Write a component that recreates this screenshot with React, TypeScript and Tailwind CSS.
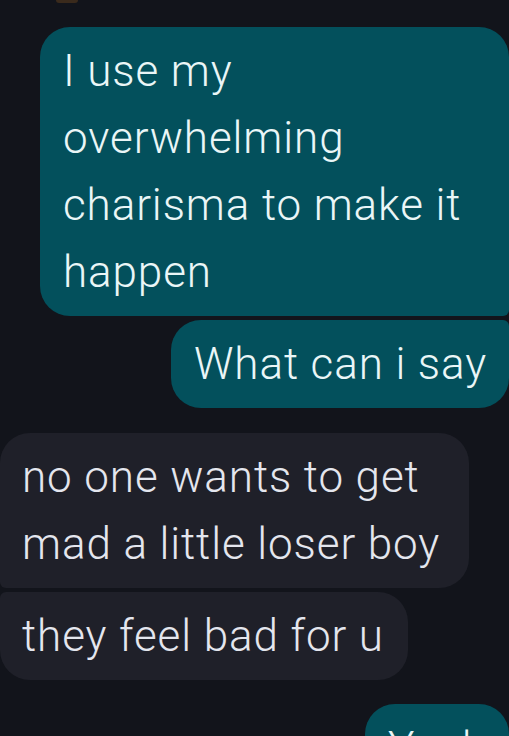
import React from 'react'

interface Bubble {
  id: number
  mine: boolean
  text: string
  shape: string
  gap: string
}

const messages: Bubble[] = [
  {
    id: 1,
    mine: true,
    text: 'I use my overwhelming charisma to make it happen',
    shape: 'rounded-tl-[30px] rounded-tr-[30px] rounded-bl-[30px] rounded-br-[6px]',
    gap: 'mt-0',
  },
  {
    id: 2,
    mine: true,
    text: 'What can i say',
    shape: 'rounded-tl-[30px] rounded-tr-[6px] rounded-bl-[30px] rounded-br-[30px]',
    gap: 'mt-[4px]',
  },
  {
    id: 3,
    mine: false,
    text: 'no one wants to get mad a little loser boy',
    shape: 'rounded-tl-[30px] rounded-tr-[30px] rounded-bl-[6px] rounded-br-[30px]',
    gap: 'mt-[25px]',
  },
  {
    id: 4,
    mine: false,
    text: 'they feel bad for u',
    shape: 'rounded-tl-[6px] rounded-tr-[30px] rounded-bl-[30px] rounded-br-[30px]',
    gap: 'mt-[4px]',
  },
  {
    id: 5,
    mine: true,
    text: 'Yeah',
    shape: 'rounded-tl-[30px] rounded-tr-[30px] rounded-bl-[30px] rounded-br-[6px]',
    gap: 'mt-[24px]',
  },
]

export default function App() {
  return (
    <div
      className="w-[509px] h-[736px] overflow-hidden bg-[#12141b]"
      style={{ fontFamily: 'Roboto, "Noto Sans", sans-serif' }}
    >
      {/* sliver of a reaction from the message above */}
      <div className="ml-[56px] h-[3px] w-[22px] rounded-b-full bg-[#3a2a1c]" />

      <div className="flex flex-col pt-[24px]">
        {messages.map((m) => (
          <div
            key={m.id}
            className={`flex ${m.gap} ${m.mine ? 'justify-end' : 'justify-start'}`}
          >
            <div
              className={`max-w-[469px] py-[10.5px] text-[44px] leading-[67px] font-light tracking-[0.9px] ${m.shape} ${
                m.mine
                  ? 'bg-[#03505c] text-[#eaf6f7] pl-[23px] pr-[22px]'
                  : 'bg-[#1f2029] text-[#e4e6ee] pl-[22px] pr-[24px]'
              }`}
            >
              {m.text}
            </div>
          </div>
        ))}
      </div>
    </div>
  )
}
